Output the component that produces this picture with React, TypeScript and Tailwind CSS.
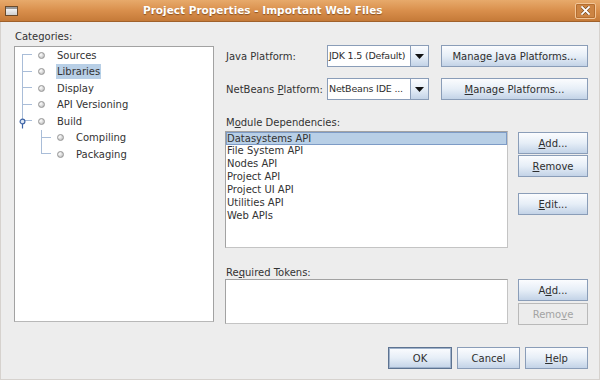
import React from "react";

const font = { fontFamily: '"DejaVu Sans", "Liberation Sans", sans-serif' };

function Btn({
  children,
  className = "",
  disabled = false,
  primary = false,
}: {
  children: React.ReactNode;
  className?: string;
  disabled?: boolean;
  primary?: boolean;
}) {
  if (disabled) {
    return (
      <div
        className={`h-[22px] flex items-center justify-center border border-[#b9b9b9] bg-[#ececec] text-[#a3a3a3] text-[10px] ${className}`}
      >
        {children}
      </div>
    );
  }
  return (
    <div
      className={`h-[22px] flex items-center justify-center border ${
        primary ? "border-[#5d7391] shadow-[inset_0_0_0_1px_#9fb2cb]" : "border-[#8a9db8]"
      } bg-linear-to-b from-[#fbfcfe] via-[#e6eef7] to-[#c3d3e7] text-[#2e2e2e] text-[10px] ${className}`}
    >
      {children}
    </div>
  );
}

function Combo({ value }: { value: string }) {
  return (
    <div className="w-[102px] h-[22px] flex">
      <div className="flex-1 min-w-0 bg-white border border-[#8a9db8] flex items-center pl-[1px] text-[9.5px] tracking-[-0.2px] text-[#2e2e2e] whitespace-nowrap">
        {value}
      </div>
      <div className="w-[18px] shrink-0 border border-l-0 border-[#8a9db8] bg-linear-to-b from-[#fbfcfe] via-[#e6eef7] to-[#c3d3e7] flex items-center justify-center">
        <svg width="9" height="5" viewBox="0 0 9 5">
          <path d="M0 0 H9 L4.5 5 Z" fill="#111" />
        </svg>
      </div>
    </div>
  );
}

function Bullet() {
  return (
    <span className="block w-[7px] h-[7px] rounded-full border border-[#959595] bg-[radial-gradient(circle_at_35%_35%,#ffffff,#b0b0b0)]" />
  );
}

type Conn = "first" | "mid" | "last" | "none";

function Connector({ kind, knob = false }: { kind: Conn; knob?: boolean }) {
  const line = "border-[#a9bdd8]";
  return (
    <div className="relative w-[10px] h-full flex flex-col">
      <div
        className={`h-1/2 ${kind === "none" ? "" : "border-b"} ${
          kind === "mid" || kind === "last" ? "border-l" : ""
        } ${line}`}
      />
      <div className={`h-1/2 ${kind === "first" || kind === "mid" ? "border-l" : ""} ${line}`} />
      {knob && (
        <svg className="absolute left-[-3px] top-[5px]" width="7" height="11" viewBox="0 0 7 11">
          <circle cx="3.5" cy="3.5" r="2.4" fill="#dfe8f5" stroke="#3c63a6" strokeWidth="1.2" />
          <line x1="3.5" y1="6" x2="3.5" y2="10.5" stroke="#3c63a6" strokeWidth="1.2" />
        </svg>
      )}
    </div>
  );
}

function TreeRow({
  label,
  level,
  kind,
  knob,
  selected,
}: {
  label: string;
  level: 1 | 2;
  kind: Conn;
  knob?: boolean;
  selected?: boolean;
}) {
  return (
    <div className={`h-[16.5px] flex items-center ${level === 1 ? "pl-[7px]" : "pl-[26px]"}`}>
      <Connector kind={kind} knob={knob} />
      <div className="ml-[6px]">
        <Bullet />
      </div>
      <span
        className={`ml-[11px] px-[1px] leading-[15px] text-[10px] ${selected ? "bg-[#b8cfe6]" : ""}`}
      >
        {label}
      </span>
    </div>
  );
}

const modules = [
  "Datasystems API",
  "File System API",
  "Nodes API",
  "Project API",
  "Project UI API",
  "Utilities API",
  "Web APIs",
];

export default function App() {
  return (
    <div className="w-[600px] h-[380px] flex flex-col text-[#333] select-none" style={font}>
      {/* Title bar */}
      <div className="h-[22px] flex items-center bg-linear-to-b from-[#e7aa6b] via-[#d98f4c] to-[#c57a38] border-b border-[#a0612b]">
        <div className="ml-[5px] w-[13px] h-[10px] border border-[#6b4a2a] bg-linear-to-b from-[#ffffff] to-[#cfcfcf] shadow-[inset_0_2px_0_#9a9a9a]" />
        <span className="ml-[125px] text-white font-bold text-[10.5px] [text-shadow:0_1px_1px_rgba(90,45,10,0.6)] whitespace-nowrap">
          Project Properties - Important Web Files
        </span>
        <div className="flex-1" />
        <div className="mr-[4px] w-[21px] h-[16px] rounded-[2px] border border-[#f2c597] bg-[#cc8443] shadow-[inset_0_0_0_1px_#b56e30] flex items-center justify-center">
          <svg width="9" height="9" viewBox="0 0 9 9">
            <path d="M1 1 L8 8 M8 1 L1 8" stroke="#6a3d15" strokeWidth="3" strokeLinecap="square" />
            <path d="M1 1 L8 8 M8 1 L1 8" stroke="#ffffff" strokeWidth="1.8" strokeLinecap="square" />
          </svg>
        </div>
      </div>

      {/* Body */}
      <div className="flex-1 bg-[#ededed] flex flex-col border-x border-b border-[#d6d2ce]">
        <div className="flex">
          {/* Categories */}
          <div className="ml-[13px] w-[200px] pt-[8px]">
            <div className="h-[13px] leading-[13px] text-[10px] pl-[1px]">Categories:</div>
            <div className="mt-[3px] h-[276px] bg-white border border-[#a2a2a2] border-b-[#b8b8b8]">
              <TreeRow label="Sources" level={1} kind="first" />
              <TreeRow label="Libraries" level={1} kind="mid" selected />
              <TreeRow label="Display" level={1} kind="mid" />
              <TreeRow label="API Versioning" level={1} kind="mid" />
              <TreeRow label="Build" level={1} kind="last" knob />
              <TreeRow label="Compiling" level={2} kind="mid" />
              <TreeRow label="Packaging" level={2} kind="last" />
            </div>
          </div>

          {/* Right side */}
          <div className="ml-[11px] w-[363px] pt-[23px] text-[10px]">
            <div className="h-[22px] flex items-center">
              <span className="w-[102px] pl-[1px]">
                <span className="underline">J</span>ava Platform:
              </span>
              <Combo value="JDK 1.5 (Default)" />
              <Btn className="ml-[12px] w-[147px]">
                Mana<span className="underline">g</span>e Java Platforms...
              </Btn>
            </div>
            <div className="mt-[11px] h-[22px] flex items-center">
              <span className="w-[102px] pl-[1px]">
                NetBeans <span className="underline">P</span>latform:
              </span>
              <Combo value="NetBeans IDE ..." />
              <Btn className="ml-[12px] w-[147px]">
                <span className="underline">M</span>anage Platforms...
              </Btn>
            </div>

            <div className="mt-[16px] h-[13px] leading-[13px] pl-[1px]">
              M<span className="underline">o</span>dule Dependencies:
            </div>
            <div className="mt-[2px] flex">
              <div className="w-[283px] h-[117px] bg-white border border-[#a2a2a2] border-b-[#c4c4c4] border-r-[#c4c4c4]">
                {modules.map((m, i) => (
                  <div
                    key={m}
                    className={`h-[13px] leading-[12px] whitespace-nowrap ${
                      i === 0 ? "bg-[#b8cfe6] border border-[#7d9bc6] pl-0" : "pl-[1px]"
                    }`}
                  >
                    {m}
                  </div>
                ))}
              </div>
              <div className="ml-[10px] w-[70px] flex flex-col">
                <Btn className="mt-[1px]">
                  <span className="underline">A</span>dd...
                </Btn>
                <Btn className="mt-[1px]">
                  <span className="underline">R</span>emove
                </Btn>
                <Btn className="mt-[16px]">
                  <span className="underline">E</span>dit...
                </Btn>
              </div>
            </div>

            <div className="mt-[19px] h-[12px] leading-[12px] pl-[1px]">
              Re<span className="underline">q</span>uired Tokens:
            </div>
            <div className="flex">
              <div className="w-[283px] h-[45px] bg-white border border-[#a2a2a2] border-b-[#c4c4c4] border-r-[#c4c4c4]" />
              <div className="ml-[10px] w-[70px] flex flex-col">
                <Btn>
                  A<span className="underline">d</span>d...
                </Btn>
                <Btn className="mt-[2px]" disabled>
                  Remo<span className="underline">v</span>e
                </Btn>
              </div>
            </div>
          </div>
        </div>

        {/* Dialog buttons */}
        <div className="mt-[22px] flex justify-end pr-[11px]">
          <Btn primary className="w-[64px]">OK</Btn>
          <Btn className="ml-[5px] w-[63px]">Cancel</Btn>
          <Btn className="ml-[5px] w-[63px]">
            <span className="underline">H</span>elp
          </Btn>
        </div>
      </div>
    </div>
  );
}
